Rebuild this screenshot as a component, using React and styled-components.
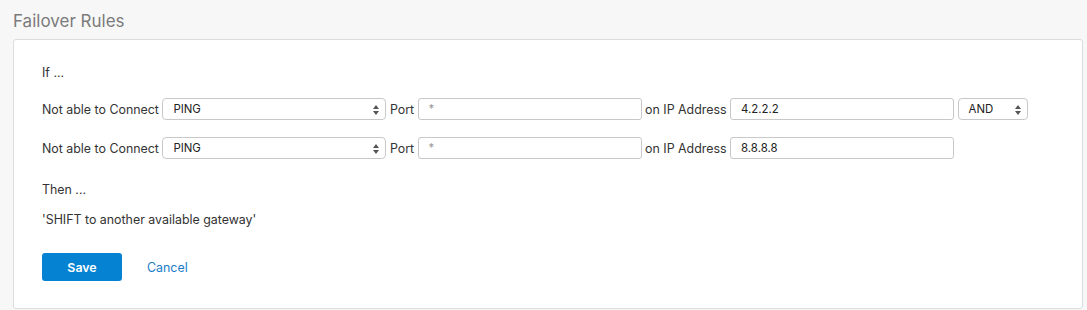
import React from "react";
import styled, { createGlobalStyle } from "styled-components";

const Global = createGlobalStyle`
  html, body { margin: 0; padding: 0; background: #f7f7f7; }
  body { font-family: Inter, "Noto Sans", "Liberation Sans", sans-serif; color: #333; }
  * { box-sizing: border-box; }
`;

const Page = styled.div`
  padding: 11px 4px 0 13px;
`;

const Title = styled.h2`
  margin: 0 0 8px 0;
  font-size: 17px;
  line-height: 20px;
  font-weight: 400;
  color: #7b7b7b;
`;

const Panel = styled.div`
  background: #fff;
  border: 1px solid #dcdcdc;
  border-radius: 3px;
  padding: 25px 28px 26px 28px;
  height: 270px;
`;

const Text = styled.div`
  font-size: 12.4px;
  line-height: 16px;
  color: #333;
  margin-top: ${(p) => p.$mt || 0}px;
`;

const Row = styled.div`
  display: flex;
  align-items: center;
  gap: 3.5px;
  height: 22px;
  margin-top: ${(p) => p.$mt || 0}px;
`;

const Label = styled.span`
  font-size: 12.4px;
  color: #333;
  white-space: nowrap;
`;

const SelectBox = styled.div`
  position: relative;
  width: ${(p) => p.$w}px;
  height: 22px;
  border: 1px solid #c8c8c8;
  border-radius: 4px;
  background: #fff;
  display: flex;
  align-items: center;
  padding-left: 10px;
  font-size: 11.4px;
  color: #222;
`;

const Arrows = styled.svg`
  position: absolute;
  right: 6px;
  top: 6px;
`;

const Input = styled.div`
  width: 224px;
  height: 22px;
  border: 1px solid #c8c8c8;
  border-radius: 3px;
  background: #fff;
  display: flex;
  align-items: center;
  padding-left: 10px;
  font-size: 11.4px;
  color: ${(p) => (p.$placeholder ? "#999" : "#222")};
`;

const Actions = styled.div`
  display: flex;
  align-items: center;
  gap: 25px;
  margin-top: 25px;
`;

const Button = styled.button`
  width: 80px;
  height: 28px;
  border: none;
  border-radius: 3px;
  background: #0583d2;
  color: #fff;
  font-family: inherit;
  font-size: 12.4px;
  font-weight: 600;
`;

const Link = styled.a`
  font-size: 12.4px;
  color: #1a7cc9;
  text-decoration: none;
`;

const Select = ({ w, value }) => (
  <SelectBox $w={w}>
    {value}
    <Arrows width="6" height="10" viewBox="0 0 6 10">
      <path d="M3 0 L6 4 L0 4 Z M3 10 L6 6 L0 6 Z" fill="#555" />
    </Arrows>
  </SelectBox>
);

const RuleRow = ({ ip, and, mt }) => (
  <Row $mt={mt}>
    <Label>Not able to Connect</Label>
    <Select w={224} value="PING" />
    <Label>Port</Label>
    <Input $placeholder>*</Input>
    <Label>on IP Address</Label>
    <Input>{ip}</Input>
    {and && <Select w={70} value="AND" />}
  </Row>
);

export default function App() {
  return (
    <>
      <Global />
      <Page>
        <Title>Failover Rules</Title>
        <Panel>
          <Text>If ...</Text>
          <RuleRow ip="4.2.2.2" and mt={17} />
          <RuleRow ip="8.8.8.8" mt={17} />
          <Text $mt={23}>Then ...</Text>
          <Text $mt={14}>'SHIFT to another available gateway'</Text>
          <Actions>
            <Button>Save</Button>
            <Link href="#">Cancel</Link>
          </Actions>
        </Panel>
      </Page>
    </>
  );
}
